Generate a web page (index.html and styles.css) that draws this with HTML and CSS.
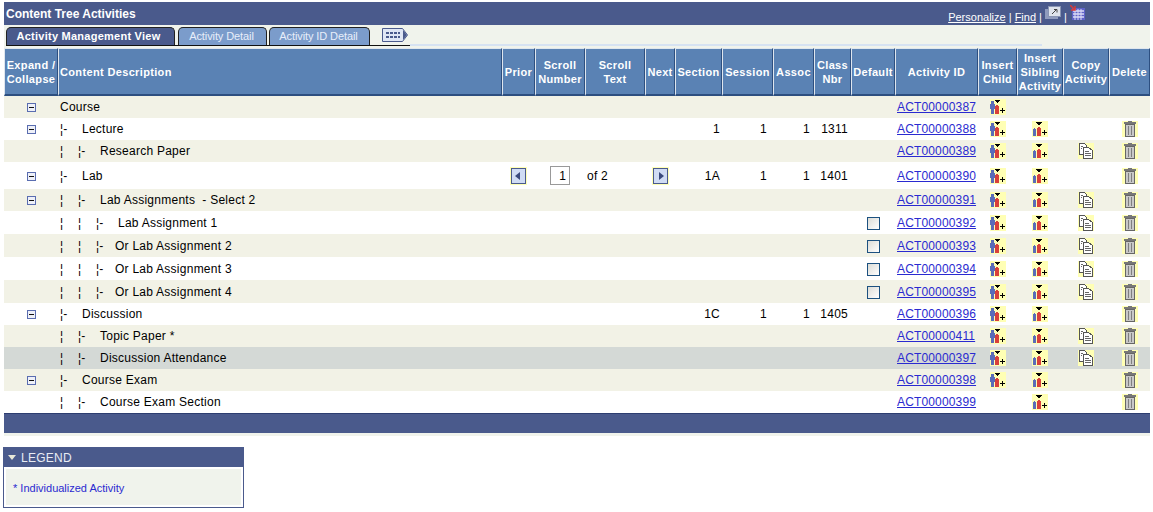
FILE: index.html
```html
<!DOCTYPE html>
<html lang="en">
<head>
<meta charset="UTF-8" />
<title>Content Tree Activities</title>
<link rel="stylesheet" href="styles.css">
</head>
<body>
<svg class="defs" width="0" height="0">
  <symbol id="minus" viewBox="0 0 9 9"><rect x=".5" y=".5" width="8" height="8" fill="#eef0f8" stroke="#5a6db0"/><rect x="2" y="4" width="5" height="1" fill="#111"/></symbol>
  <symbol id="child" viewBox="0 0 16 16"><rect width="16" height="16" fill="#ffffb4"/><path d="M1 2h3v3h1v5H4v5H1v-5H0V5h1z" fill="#5a6cb8"/><path d="M6 6h2v1h1v8H5V7h1z" fill="#d8403a"/><path d="M5 1h5v1H9v1H8v1H7V3H6V2H5z" fill="#000"/><path d="M12 9h1v2h2v1h-2v2h-1v-2h-2v-1h2z" fill="#000"/></symbol>
  <symbol id="sibling" viewBox="0 0 16 16"><rect width="16" height="16" fill="#ffffb4"/><path d="M2 7h1v1h1v7H1V8h1z" fill="#5a6cb8"/><path d="M6 6h2v1h1v8H5V7h1z" fill="#d8403a"/><path d="M4 1h6v1H9v1H8v1H6V3H5V2H4z" fill="#000"/><path d="M12 9h1v2h2v1h-2v2h-1v-2h-2v-1h2z" fill="#000"/></symbol>
  <symbol id="copy" viewBox="0 0 16 16"><rect width="16" height="16" fill="#ffffb4"/><path d="M1.500.5h5l2 2v9h-7z" fill="#fff" stroke="#555"/><path d="M5.500 4.500h5l4 3v8h-9z" fill="#fff" stroke="#555"/><path d="M7 8.500h4M7 10.500h6M7 12.500h6M3 3.500h2M3 5.500h1" stroke="#666"/></symbol>
  <symbol id="trash" viewBox="0 0 16 16"><rect width="16" height="16" fill="#ffffb4"/><path d="M6 0h4v1h4v2H2V1h4z" fill="#777"/><rect x="3.500" y="3.500" width="9" height="12" fill="#c8c8c8" stroke="#666"/><path d="M6.500 5v9M9.500 5v9" stroke="#808080"/></symbol>
</svg>

<div class="title-bar">
  <span class="title">Content Tree Activities</span>
  <span class="title-links">
    <a href="#">Personalize</a> | <a href="#">Find</a> |
    <svg class="tool-icon" width="16" height="14" viewBox="0 0 16 14"><rect x="0" y="3" width="13" height="10" fill="#8f9bbd"/><rect x="3.500" y=".5" width="12" height="10" fill="#dfe4ec" stroke="#8a96b4"/><path d="M7 8l5-5M9 3.500h3v3" stroke="#444" fill="none"/></svg>
    |
    <svg class="tool-icon" width="15" height="15" viewBox="0 0 15 15"><rect x="2" y="3" width="13" height="12" fill="#5f63c8"/><path d="M3 6h11M3 9h11M3 12h11" stroke="#dcdcf6" stroke-width="1.500"/><path d="M5 4v11M8 4v11M11 4v11" stroke="#dcdcf6"/><path d="M0 0l5 5M5 1v4H1" stroke="#d83a3a" stroke-width="1.500" fill="none"/></svg>
  </span>
</div>

<div class="tab-strip">
  <span class="tab active">Activity Management View</span>
  <span class="tab w-detail">Activity Detail</span>
  <span class="tab w-id">Activity ID Detail</span>
  <span class="tab-menu">
    <svg width="28" height="16" viewBox="0 0 28 16"><path d="M1.500 1.500h20l5 6.500-5 6.500h-20z" fill="#dfe6f4" stroke="#4a5a8c"/><path d="M22 3l4 5-4 5z" fill="#4a5a8c"/><path d="M5 6h14M5 10h14" stroke="#4a5a8c" stroke-width="2" stroke-dasharray="3 1"/></svg>
  </span>
  <span class="tab-rule"></span>
</div>

<table class="tree">
  <colgroup>
    <col class="c-exp"><col class="c-desc"><col class="c-prior"><col class="c-num"><col class="c-text"><col class="c-next"><col class="c-sec"><col class="c-ses"><col class="c-assoc"><col class="c-class"><col class="c-def"><col class="c-id"><col class="c-child"><col class="c-sib"><col class="c-copy"><col class="c-del">
  </colgroup>
  <thead>
    <tr>
      <th>Expand /<br>Collapse</th><th class="left">Content Description</th><th>Prior</th><th>Scroll<br>Number</th><th>Scroll<br>Text</th><th>Next</th><th>Section</th><th>Session</th><th>Assoc</th><th>Class<br>Nbr</th><th>Default</th><th>Activity ID</th><th>Insert<br>Child</th><th>Insert<br>Sibling<br>Activity</th><th>Copy<br>Activity</th><th>Delete</th>
    </tr>
  </thead>
  <tbody>
    <tr class="alt h22">
      <td class="ctr"><svg class="mini"><use href="#minus"/></svg></td><td>Course</td><td></td><td></td><td></td><td></td><td></td><td></td><td></td><td></td><td></td>
      <td class="id"><a href="#">ACT00000387</a></td><td class="ctr"><svg class="ico"><use href="#child"/></svg></td><td></td><td></td><td></td>
    </tr>
    <tr class="h22">
      <td class="ctr"><svg class="mini"><use href="#minus"/></svg></td><td><span class="b">¦-</span>Lecture</td><td></td><td></td><td></td><td></td><td class="sec">1</td><td class="ses">1</td><td class="asc">1</td><td class="cls">1311</td><td></td>
      <td class="id"><a href="#">ACT00000388</a></td><td class="ctr"><svg class="ico"><use href="#child"/></svg></td><td class="ctr"><svg class="ico"><use href="#sibling"/></svg></td><td></td><td class="ctr"><svg class="ico"><use href="#trash"/></svg></td>
    </tr>
    <tr class="alt h22">
      <td></td><td><span class="t">¦</span><span class="b">¦-</span>Research Paper</td><td></td><td></td><td></td><td></td><td></td><td></td><td></td><td></td><td></td>
      <td class="id"><a href="#">ACT00000389</a></td><td class="ctr"><svg class="ico"><use href="#child"/></svg></td><td class="ctr"><svg class="ico"><use href="#sibling"/></svg></td><td class="ctr"><svg class="ico"><use href="#copy"/></svg></td><td class="ctr"><svg class="ico"><use href="#trash"/></svg></td>
    </tr>
    <tr class="h27">
      <td class="ctr"><svg class="mini"><use href="#minus"/></svg></td><td><span class="b">¦-</span>Lab</td>
      <td class="ctr"><span class="nav prev"></span></td>
      <td class="ctr"><input class="scroll-num" type="text" value="1"></td>
      <td class="of">of 2</td>
      <td class="ctr"><span class="nav next"></span></td>
      <td class="sec">1A</td><td class="ses">1</td><td class="asc">1</td><td class="cls">1401</td><td></td>
      <td class="id"><a href="#">ACT00000390</a></td><td class="ctr"><svg class="ico"><use href="#child"/></svg></td><td class="ctr"><svg class="ico"><use href="#sibling"/></svg></td><td></td><td class="ctr"><svg class="ico"><use href="#trash"/></svg></td>
    </tr>
    <tr class="alt h22">
      <td class="ctr"><svg class="mini"><use href="#minus"/></svg></td><td><span class="t">¦</span><span class="b">¦-</span>Lab Assignments&nbsp; - Select 2</td><td></td><td></td><td></td><td></td><td></td><td></td><td></td><td></td><td></td>
      <td class="id"><a href="#">ACT00000391</a></td><td class="ctr"><svg class="ico"><use href="#child"/></svg></td><td class="ctr"><svg class="ico"><use href="#sibling"/></svg></td><td class="ctr"><svg class="ico"><use href="#copy"/></svg></td><td class="ctr"><svg class="ico"><use href="#trash"/></svg></td>
    </tr>
    <tr class="h23">
      <td></td><td><span class="t">¦</span><span class="t">¦</span><span class="b">¦-</span>Lab Assignment 1</td><td></td><td></td><td></td><td></td><td></td><td></td><td></td><td></td>
      <td class="ctr"><input class="check" type="checkbox"></td>
      <td class="id"><a href="#">ACT00000392</a></td><td class="ctr"><svg class="ico"><use href="#child"/></svg></td><td class="ctr"><svg class="ico"><use href="#sibling"/></svg></td><td class="ctr"><svg class="ico"><use href="#copy"/></svg></td><td class="ctr"><svg class="ico"><use href="#trash"/></svg></td>
    </tr>
    <tr class="alt h23">
      <td></td><td><span class="t">¦</span><span class="t">¦</span><span class="b or">¦-</span>Or Lab Assignment 2</td><td></td><td></td><td></td><td></td><td></td><td></td><td></td><td></td>
      <td class="ctr"><input class="check" type="checkbox"></td>
      <td class="id"><a href="#">ACT00000393</a></td><td class="ctr"><svg class="ico"><use href="#child"/></svg></td><td class="ctr"><svg class="ico"><use href="#sibling"/></svg></td><td class="ctr"><svg class="ico"><use href="#copy"/></svg></td><td class="ctr"><svg class="ico"><use href="#trash"/></svg></td>
    </tr>
    <tr class="h23">
      <td></td><td><span class="t">¦</span><span class="t">¦</span><span class="b or">¦-</span>Or Lab Assignment 3</td><td></td><td></td><td></td><td></td><td></td><td></td><td></td><td></td>
      <td class="ctr"><input class="check" type="checkbox"></td>
      <td class="id"><a href="#">ACT00000394</a></td><td class="ctr"><svg class="ico"><use href="#child"/></svg></td><td class="ctr"><svg class="ico"><use href="#sibling"/></svg></td><td class="ctr"><svg class="ico"><use href="#copy"/></svg></td><td class="ctr"><svg class="ico"><use href="#trash"/></svg></td>
    </tr>
    <tr class="alt h23">
      <td></td><td><span class="t">¦</span><span class="t">¦</span><span class="b or">¦-</span>Or Lab Assignment 4</td><td></td><td></td><td></td><td></td><td></td><td></td><td></td><td></td>
      <td class="ctr"><input class="check" type="checkbox"></td>
      <td class="id"><a href="#">ACT00000395</a></td><td class="ctr"><svg class="ico"><use href="#child"/></svg></td><td class="ctr"><svg class="ico"><use href="#sibling"/></svg></td><td class="ctr"><svg class="ico"><use href="#copy"/></svg></td><td class="ctr"><svg class="ico"><use href="#trash"/></svg></td>
    </tr>
    <tr class="h22">
      <td class="ctr"><svg class="mini"><use href="#minus"/></svg></td><td><span class="b">¦-</span>Discussion</td><td></td><td></td><td></td><td></td><td class="sec">1C</td><td class="ses">1</td><td class="asc">1</td><td class="cls">1405</td><td></td>
      <td class="id"><a href="#">ACT00000396</a></td><td class="ctr"><svg class="ico"><use href="#child"/></svg></td><td class="ctr"><svg class="ico"><use href="#sibling"/></svg></td><td></td><td class="ctr"><svg class="ico"><use href="#trash"/></svg></td>
    </tr>
    <tr class="alt h22">
      <td></td><td><span class="t">¦</span><span class="b">¦-</span>Topic Paper *</td><td></td><td></td><td></td><td></td><td></td><td></td><td></td><td></td><td></td>
      <td class="id"><a href="#">ACT00000411</a></td><td class="ctr"><svg class="ico"><use href="#child"/></svg></td><td class="ctr"><svg class="ico"><use href="#sibling"/></svg></td><td class="ctr"><svg class="ico"><use href="#copy"/></svg></td><td class="ctr"><svg class="ico"><use href="#trash"/></svg></td>
    </tr>
    <tr class="sel h22">
      <td></td><td><span class="t">¦</span><span class="b">¦-</span>Discussion Attendance</td><td></td><td></td><td></td><td></td><td></td><td></td><td></td><td></td><td></td>
      <td class="id"><a href="#">ACT00000397</a></td><td class="ctr"><svg class="ico"><use href="#child"/></svg></td><td class="ctr"><svg class="ico"><use href="#sibling"/></svg></td><td class="ctr"><svg class="ico"><use href="#copy"/></svg></td><td class="ctr"><svg class="ico"><use href="#trash"/></svg></td>
    </tr>
    <tr class="alt h22">
      <td class="ctr"><svg class="mini"><use href="#minus"/></svg></td><td><span class="b">¦-</span>Course Exam</td><td></td><td></td><td></td><td></td><td></td><td></td><td></td><td></td><td></td>
      <td class="id"><a href="#">ACT00000398</a></td><td class="ctr"><svg class="ico"><use href="#child"/></svg></td><td class="ctr"><svg class="ico"><use href="#sibling"/></svg></td><td></td><td class="ctr"><svg class="ico"><use href="#trash"/></svg></td>
    </tr>
    <tr class="h22">
      <td></td><td><span class="t">¦</span><span class="b">¦-</span>Course Exam Section</td><td></td><td></td><td></td><td></td><td></td><td></td><td></td><td></td><td></td>
      <td class="id"><a href="#">ACT00000399</a></td><td></td><td class="ctr"><svg class="ico"><use href="#sibling"/></svg></td><td></td><td class="ctr"><svg class="ico"><use href="#trash"/></svg></td>
    </tr>
  </tbody>
</table>
<div class="foot-bar"></div>
<div class="foot-strip"></div>

<div class="legend">
  <div class="legend-head"><span class="legend-arrow"></span>LEGEND</div>
  <div class="legend-body">* Individualized Activity</div>
</div>
</body>
</html>
```

FILE: styles.css
```css
html, body {
  margin: 0;
  background: #fff;
}
body {
  padding: 2px 3px 0 4px;
  font-family: "Liberation Sans", Arial, sans-serif;
  font-size: 12px;
  color: #000;
  overflow: hidden;
}
.defs {
  position: absolute;
}
a {
  color: #2a2ad0;
}

/* title bar */
.title-bar {
  display: flex;
  justify-content: space-between;
  height: 23px;
  padding: 0 65px 0 2px;
  background: #4a5a8c;
  color: #fff;
}
.title {
  font-weight: bold;
  font-size: 12px;
  line-height: 24px;
}
.title-links {
  font-size: 11px;
  line-height: 20px;
  padding-top: 3px;
  white-space: nowrap;
}
.title-links a {
  color: #fff;
}
.tool-icon {
  vertical-align: 1px;
}

/* tabs */
.tab-strip {
  display: flex;
  align-items: flex-start;
  height: 23px;
  padding: 2px 0 0 2px;
  box-sizing: border-box;
  background: #f0f3ec;
  position: relative;
}
.tab {
  box-sizing: border-box;
  height: 18px;
  margin-right: 2px;
  border: 1px solid #222;
  border-bottom: 0;
  border-radius: 5px 5px 0 0;
  background: #7b9ccb;
  color: #e8eefa;
  font-size: 11px;
  letter-spacing: -.1px;
  line-height: 17px;
  padding-right: 2px;
  text-align: center;
}
.tab.active {
  width: 169px;
  margin-right: 3px;
  padding-right: 4px;
  background: #4a5a8c;
  color: #fff;
  font-weight: bold;
  letter-spacing: .25px;
}
.w-detail {
  width: 89px;
}
.w-id {
  width: 101px;
}
.tab-menu {
  width: 28px;
  height: 18px;
  margin-left: 9px;
}
.tab-rule {
  position: absolute;
  left: 406px;
  top: 19px;
  width: 632px;
  height: 2px;
  background: #d6e2f2;
}
.tab-strip::after {
  content: "";
  position: absolute;
  left: 2px;
  top: 20px;
  width: 404px;
  height: 1px;
  background: #111;
}

/* tree table */
.tree {
  width: 1146px;
  table-layout: fixed;
  border-collapse: separate;
  border-spacing: 0;
}
.c-exp { width: 54px; }
.c-desc { width: 444px; }
.c-prior { width: 33px; }
.c-num { width: 50px; }
.c-text { width: 60px; }
.c-next { width: 30px; }
.c-sec { width: 47px; }
.c-ses { width: 51px; }
.c-assoc { width: 41px; }
.c-class { width: 37px; }
.c-def { width: 44px; }
.c-id { width: 83px; }
.c-child { width: 39px; }
.c-sib { width: 46px; }
.c-copy { width: 46px; }
.c-del { width: 41px; }

th {
  box-sizing: border-box;
  height: 48px;
  padding: 0;
  background: #5a82b4;
  border-top: 1px solid #dfe6ee;
  border-left: 1px solid #dfe6ee;
  border-right: 1px solid #2d4f80;
  border-bottom: 2px solid #2d4f80;
  color: #fff;
  font-size: 11px;
  letter-spacing: .35px;
  line-height: 14px;
  text-align: center;
  white-space: nowrap;
}
th.left {
  text-align: left;
  padding-left: 1px;
}
td {
  padding: 0;
  white-space: nowrap;
  vertical-align: middle;
  letter-spacing: .25px;
}
td:nth-child(2) {
  padding-left: 2px;
}
.h22 td { height: 22px; }
.h23 td { height: 23px; }
.h27 td { height: 27px; }
.alt td { background: #f2f2e6; }
.sel td { background: #d4d9d6; }
.ctr {
  text-align: center;
}
.t {
  display: inline-block;
  width: 18px;
}
.b {
  display: inline-block;
  width: 22px;
}
.b.or {
  width: 19px;
}
.sec, .ses, .asc, .cls {
  text-align: right;
}
.sec { padding-right: 2px; }
.ses { padding-right: 6px; }
.asc { padding-right: 4px; }
.cls { padding-right: 3px; }
.of {
  padding-left: 2px;
}
.id {
  padding-left: 2px;
  letter-spacing: .15px;
}
.mini {
  display: inline-block;
  vertical-align: middle;
  width: 9px;
  height: 9px;
}
.ico {
  display: inline-block;
  vertical-align: middle;
  width: 16px;
  height: 16px;
  shape-rendering: crispEdges;
}
.check {
  appearance: none;
  display: inline-block;
  vertical-align: middle;
  box-sizing: border-box;
  width: 13px;
  height: 13px;
  margin: 0;
  border: 1px solid #1c5180;
  background: linear-gradient(135deg, #dcdcd6, #fff);
}
.scroll-num {
  box-sizing: border-box;
  width: 20px;
  height: 19px;
  padding: 0 3px 0 0;
  border: 1px solid #999;
  background: #fff;
  font: 12px "Liberation Sans", Arial, sans-serif;
  text-align: right;
  vertical-align: middle;
}
.nav {
  display: inline-block;
  position: relative;
  box-sizing: border-box;
  vertical-align: middle;
  width: 15px;
  height: 16px;
  background: #d0dcf4;
  border: 1px solid #4a5a8c;
  outline: 1px solid #ffffb4;
}
.nav::after {
  content: "";
  position: absolute;
  top: 3px;
  border-top: 4px solid transparent;
  border-bottom: 4px solid transparent;
}
.prev::after {
  left: 3px;
  border-right: 5px solid #3a4a7c;
}
.next::after {
  left: 5px;
  border-left: 5px solid #3a4a7c;
}

/* footer and legend */
.foot-bar {
  height: 19px;
  background: #4a5a8c;
  border-top: 1px solid #2d3d70;
}
.foot-strip {
  height: 3px;
  background: #f0f3ec;
}
.legend {
  width: 241px;
  margin: 11px 0 0 -1px;
}
.legend-head {
  display: flex;
  align-items: center;
  height: 20px;
  padding-top: 1px;
  box-sizing: border-box;
  background: #4a5a8c;
  color: #e8ecf4;
  font-size: 12px;
  letter-spacing: .25px;
}
.legend-arrow {
  width: 0;
  height: 0;
  margin: 0 5px 0 5px;
  border-left: 4px solid transparent;
  border-right: 4px solid transparent;
  border-top: 5px solid #e8e8d8;
}
.legend-body {
  box-sizing: border-box;
  height: 41px;
  padding: 1px 0 0 9px;
  border: 1px solid #4a5a8c;
  border-top: 0;
  background: #f0f3ec;
  box-shadow: inset 0 0 0 2px #fff;
  color: #2a2ad0;
  font-size: 11px;
  line-height: 41px;
}
```
